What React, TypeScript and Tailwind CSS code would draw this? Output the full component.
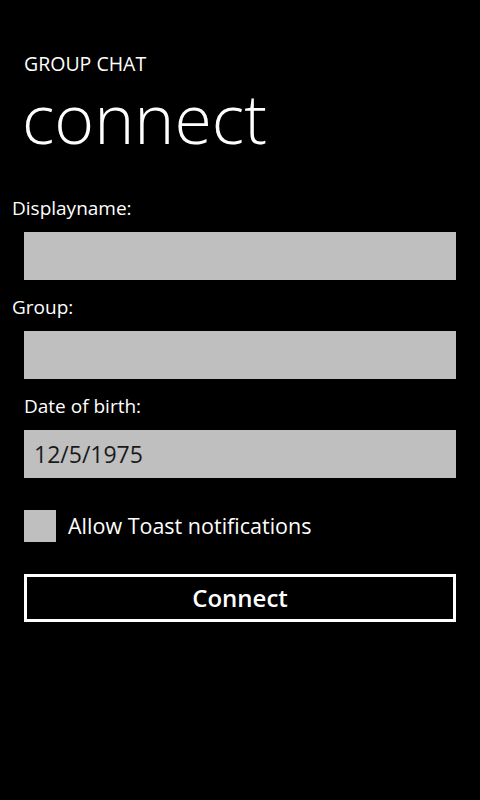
export default function App() {
  return (
    <div
      className="w-[480px] h-[800px] bg-black text-white overflow-hidden"
      style={{ fontFamily: '"Open Sans", "Noto Sans", sans-serif' }}
    >
      {/* Title panel */}
      <div className="px-6 pt-[50px]">
        <div className="text-[19.5px] leading-[28px]">GROUP CHAT</div>
        <div className="text-[68px] leading-[80px] font-light -ml-[2px]">connect</div>
      </div>

      {/* Form */}
      <div className="mt-[36px] flex flex-col">
        <label className="px-3 text-[19px] leading-[28px]">Displayname:</label>
        <div className="mx-6 mt-[10px] h-[48px] bg-[#bfbfbf]" />

        <label className="mt-[13px] px-3 text-[19px] leading-[28px]">Group:</label>
        <div className="mx-6 mt-[10px] h-[48px] bg-[#bfbfbf]" />

        <label className="mt-[13px] px-6 text-[19px] leading-[28px]">Date of birth:</label>
        <div className="mx-6 mt-[10px] h-[48px] bg-[#bfbfbf] flex items-center px-[10px] text-[23px] text-[#1a1a1a]">
          12/5/1975
        </div>

        <div className="mx-6 mt-[32px] flex items-center gap-3 h-[32px]">
          <div className="w-8 h-8 bg-[#bfbfbf]" />
          <span className="text-[21.5px] leading-[32px]">Allow Toast notifications</span>
        </div>

        <button className="mx-6 mt-[32px] h-[48px] border-[3px] border-white text-[24px] font-semibold">
          Connect
        </button>
      </div>
    </div>
  );
}
